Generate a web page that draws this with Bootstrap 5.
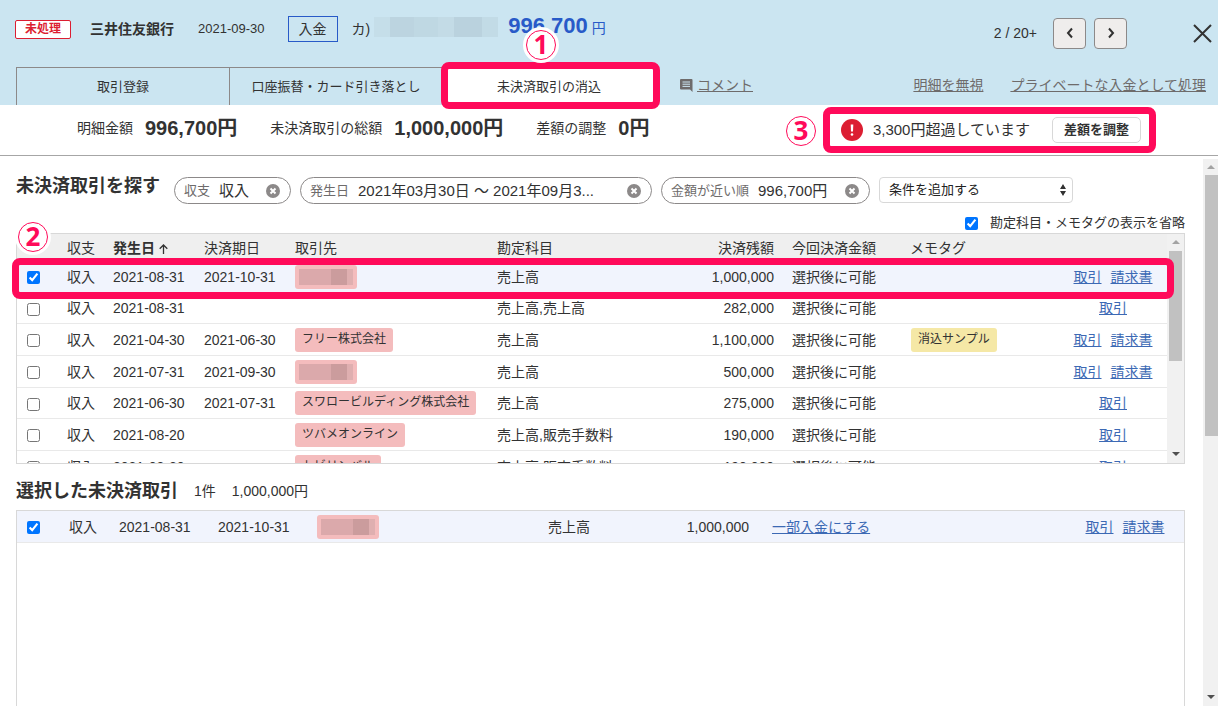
<!DOCTYPE html>
<html lang="ja">
<head>
<meta charset="utf-8">
<meta name="viewport" content="width=device-width, initial-scale=1">
<title>未決済取引の消込</title>
<link rel="stylesheet" href="https://cdn.jsdelivr.net/npm/bootstrap@5.3.0/dist/css/bootstrap.min.css">
<script src="https://cdn.jsdelivr.net/npm/bootstrap@5.3.0/dist/js/bootstrap.bundle.min.js"></script>
<style>
:root { --mark: #ff0a5a; --ink: #323232; --edge: #d8d8d8; }
body { font-family: "Liberation Sans", "Noto Sans CJK JP", sans-serif; font-size: 14px; line-height: 20px; color: var(--ink); }
button, select, input { font-family: inherit; }
.nowrap-all { white-space: nowrap; }

/* header */
.deal-head { background: #cbe5f1; }
.deal-info { height: 58px; padding-left: 15px; padding-right: 6px; }
.status-tag { background: #fff; color: #dc1e32; border: 1px solid #dc1e32; border-radius: 2px; font-size: 12px; line-height: 17px; padding: 0 9px; font-weight: 700; }
.kind-tag { border: 1px solid #285ac8; line-height: 24px; padding: 0 10px; }
.bank { margin: 0 24px 0 19px; }
.deal-date { font-size: 13px; margin-right: 23px; }
.payer { margin-left: 14px; }
.masked { display: inline-block; width: 124px; height: 20px; margin-left: 4px; margin-bottom: 4px; background: linear-gradient(90deg, #c5dee9 0 16px, #bcd4e0 16px 40px, #bfd8e3 40px 64px, #c3dbe6 64px 80px, #bad2de 80px 108px, #c2dbe6 108px); }
.amount { color: #285ac8; margin: 0 0 4px 10px; }
.amount strong { font-size: 22px; margin-right: 4px; }
.pager-btn { width: 33px; height: 31px; padding: 0; background: #efedec; border: 1px solid #8c8989; border-radius: 4px; display: flex; align-items: center; justify-content: center; }
.close-btn { border: 0; background: none; padding: 0; margin-left: 66px; display: flex; }
.tab-row { padding: 0 12px 0 16px; margin-top: 9px; height: 38px; }
.tab-list { flex: 0 0 640px; border: 1px solid #8c8989; border-bottom: 0; }
.tab-btn { flex: 1 1 0; border: 0; border-right: 1px solid #8c8989; background: none; font-size: 13px; padding: 0; color: var(--ink); position: relative; }
.tab-btn.current { background: #fff; border: 0; }
.tab-btn.current::after { content: ""; position: absolute; inset: -6px -5px -4px -2px; border: 7px solid var(--mark); border-radius: 8px; }
.sub-link { color: #6e6b6b; }
.sub-links { gap: 27px; padding-bottom: 2px; }

/* callouts */
.callout-num { position: absolute; width: 30px; height: 30px; border: 1px solid var(--mark); border-radius: 50%; background: #fff; box-shadow: 0 0 0 3px #fff; color: var(--mark); font: 700 26px/26px "Open Sans", sans-serif; text-align: center; z-index: 3; }
.num-one { top: -38px; left: 50%; margin-left: -23px; }
.num-two { top: -11px; left: 2px; }
.num-three { top: 2px; left: -44px; }
.row-frame { position: absolute; top: 25px; left: -4px; right: 11px; height: 41px; border: 7px solid var(--mark); border-radius: 8px; pointer-events: none; z-index: 2; }

/* summary */
.summary { height: 51px; border-bottom: 1px solid #a6a6a6; padding: 2px 62px 2px 77px; }
.summary dt { font-weight: 400; margin-right: 12px; }
.summary dd { font-size: 20px; line-height: 28px; font-weight: 700; margin: 0 33px 0 0; }
.over-box { position: relative; border: 7px solid var(--mark); border-radius: 8px; padding: 0 8px 0 11px; font-size: 15px; }
.over-box p { margin: 0 22px 0 10px; }
.adjust-btn { border: 1px solid var(--edge); border-radius: 5px; background: #fff; font-size: 13px; font-weight: 700; line-height: 24px; padding: 0 11px; color: var(--ink); }

/* search */
.content { padding: 21px 18px 0 16px; }
.sec-title { font-size: 18px; line-height: 18px; font-weight: 700; margin: 0; }
.chips { gap: 9px; padding-left: 14px; }
.chip { height: 27px; border: 1px solid #8c8989; border-radius: 14px; padding: 0 10px 0 9px; font-size: 15px; }
.chip small { font-size: 13px; color: #6e6b6b; margin-right: 9px; }
.chip button { border: 0; background: none; padding: 0; display: flex; margin-left: auto; }
.chip-kind { width: 117px; } .chip-date { width: 352px; } .chip-near { width: 209px; }
.cond-select { width: 194px; height: 26px; border: 1px solid var(--edge); border-radius: 4px; padding: 0 9px; font-size: 13px; color: #222; appearance: none; background: #fff url("data:image/svg+xml,%3Csvg xmlns='http://www.w3.org/2000/svg' width='6' height='12'%3E%3Cpath d='M0 5L3 0L6 5zM0 7h6L3 12z' fill='%23323232'/%3E%3C/svg%3E") no-repeat right 6px center; }
.omit-row { font-size: 13px; margin: 9px 0 0; gap: 12px; }
.tick { width: 13px; height: 13px; margin: 0; accent-color: #0075ff; display: inline-block; vertical-align: middle; }

/* tables */
.list-box { position: relative; height: 231px; }
.list-frame { border: 1px solid var(--edge); }
.deals { table-layout: fixed; width: 100%; border-collapse: separate; border-spacing: 0; white-space: nowrap; }
.deals th, .deals td { padding: 0; height: 32px; border-bottom: 1px solid #e9e9e9; }
.deals th { height: 27px; background: #efefef; border: 0; font-weight: 400; }
.deals th.sorted { font-weight: 700; }
.deals .short td { height: 31px; }
.deals .picked td { background: #f1f4fd; }
.deals td:first-child { padding-left: 10px; }
.deals .num { text-align: right; }
.deals .after-num { padding-left: 18px; }
.deals .links { text-align: center; }
.deals a { color: #3c69b4; }
.deals a + a { margin-left: 9px; }
.c-tick { width: 50px; } .c-kind { width: 46px; } .c-date { width: 91px; } .c-partner { width: 202px; }
.c-num { width: 86px; } .c-now { width: 136px; } .c-memo { width: 149px; } .c-links { width: 108px; }
.chosen .after-num { padding-left: 23px; }
.chosen .c-tick { width: 52px; } .chosen .c-kind { width: 50px; } .chosen .c-date { width: 99px; } .chosen .c-partner { width: 231px; }
.chosen .c-item { width: 100px; } .chosen .c-num { width: 101px; } .chosen .c-links { width: 118px; }
.name-tag { display: inline-block; vertical-align: middle; height: 24px; line-height: 22px; font-size: 12px; padding: 0 7px; border-radius: 3px; background: #f4bcbd; }
.memo-tag { background: #f5e8a6; margin-left: 1px; }
.hidden-name { width: 62px; padding: 4px; }
.hidden-name i { display: block; height: 16px; background: linear-gradient(90deg, #dba9ab 0 32px, #cb9c9d 32px 48px, #dfafb0 48px); }
.chosen-head { margin: 17px 0 9px; }

/* scroll bars */
.sbar { background: #f1f1f1; display: flex; flex-direction: column; align-items: center; justify-content: space-between; flex: none; }
.sbar svg { flex: none; }
.sbar-list { width: 17px; padding: 6px 0 7px; }
.sbar-list .thumb { flex: 0 0 110px; width: 13px; background: #c1c1c1; margin: 7px 0 auto; }
.sbar-page { width: 15px; margin-top: 3px; padding: 6px 0 7px; }
.sbar-page .thumb { flex: 0 0 261px; width: 13px; margin: 6px 0 auto 2px; background: #c1c1c1; }
</style>
</head>
<body class="vh-100 overflow-hidden d-flex flex-column nowrap-all">

<header class="deal-head">
  <div class="deal-info d-flex align-items-center">
    <span class="status-tag">未処理</span>
    <strong class="bank">三井住友銀行</strong>
    <span class="deal-date">2021-09-30</span>
    <span class="kind-tag">入金</span>
    <span class="payer">カ)</span>
    <span class="masked"></span>
    <span class="amount"><strong>996,700</strong>円</span>
    <div class="ms-auto d-flex align-items-center pt-2">
      <span class="me-3">2 / 20+</span>
      <button class="pager-btn me-2" type="button" aria-label="前へ"><svg width="8" height="12" viewBox="0 0 8 12" fill="none" stroke="#323232" stroke-width="2"><path d="M6 1.500 2 6l4 4.500"/></svg></button>
      <button class="pager-btn" type="button" aria-label="次へ"><svg width="8" height="12" viewBox="0 0 8 12" fill="none" stroke="#323232" stroke-width="2"><path d="M2 1.500 6 6l-4 4.500"/></svg></button>
      <button class="close-btn" type="button" aria-label="閉じる"><svg width="19" height="19" viewBox="0 0 19 19" fill="none" stroke="#323232" stroke-width="2"><path d="M1 1 18 18M18 1 1 18"/></svg></button>
    </div>
  </div>
  <div class="tab-row d-flex">
    <div class="tab-list d-flex" role="tablist">
      <button class="tab-btn" type="button" role="tab">取引登録</button>
      <button class="tab-btn" type="button" role="tab">口座振替・カード引き落とし</button>
      <button class="tab-btn current" type="button" role="tab" aria-selected="true">未決済取引の消込<span class="callout-num num-one">1</span></button>
    </div>
    <div class="sub-links d-flex align-items-center flex-grow-1 ps-4">
      <span class="d-flex align-items-center me-auto"><svg class="me-1" width="13" height="13" viewBox="0 0 13 13"><path d="M1 0h10.500q1 0 1 1v12L10 10.500H1q-1 0-1-1V1q0-1 1-1z" fill="#6e6b6b"/><path d="M2.500 3h7.500M2.500 5.200h7.500M2.500 7.400h7.500" stroke="#cbe5f1" stroke-width="1"/></svg>
      <a class="sub-link" href="#">コメント</a></span>
      <a class="sub-link" href="#">明細を無視</a>
      <a class="sub-link" href="#">プライベートな入金として処理</a>
    </div>
  </div>
</header>

<section class="summary d-flex">
  <dl class="d-flex align-items-center m-0 pb-1">
    <dt>明細金額</dt><dd>996,700円</dd>
    <dt>未決済取引の総額</dt><dd>1,000,000円</dd>
    <dt>差額の調整</dt><dd>0円</dd>
  </dl>
  <div class="over-box d-flex align-items-center ms-auto">
    <span class="callout-num num-three">3</span>
    <svg width="22" height="22" viewBox="0 0 22 22"><circle cx="11" cy="11" r="11" fill="#dc1e32"/><path d="M9.700 5.500h2.600l-.3 7h-2z" fill="#fff"/><circle cx="11" cy="15.500" r="1.300" fill="#fff"/></svg>
    <p>3,300円超過しています</p>
    <button class="adjust-btn" type="button">差額を調整</button>
  </div>
</section>

<div class="d-flex flex-grow-1 overflow-hidden">
  <main class="content flex-grow-1 d-flex flex-column overflow-hidden">
    <div class="d-flex align-items-start">
      <h2 class="sec-title flex-shrink-0">未決済取引を探す</h2>
      <div class="chips d-flex flex-grow-1">
        <div class="chip chip-kind d-flex align-items-center"><small>収支</small>収入<button type="button" aria-label="削除"><svg width="14" height="14" viewBox="0 0 14 14"><circle cx="7" cy="7" r="7" fill="#8c8989"/><path d="m4.500 4.500 5 5m0-5-5 5" stroke="#fff" stroke-width="2"/></svg></button></div>
        <div class="chip chip-date d-flex align-items-center"><small>発生日</small>2021年03月30日 ～ 2021年09月3...<button type="button" aria-label="削除"><svg width="14" height="14" viewBox="0 0 14 14"><circle cx="7" cy="7" r="7" fill="#8c8989"/><path d="m4.500 4.500 5 5m0-5-5 5" stroke="#fff" stroke-width="2"/></svg></button></div>
        <div class="chip chip-near d-flex align-items-center"><small>金額が近い順</small>996,700円<button type="button" aria-label="削除"><svg width="14" height="14" viewBox="0 0 14 14"><circle cx="7" cy="7" r="7" fill="#8c8989"/><path d="m4.500 4.500 5 5m0-5-5 5" stroke="#fff" stroke-width="2"/></svg></button></div>
        <select class="cond-select" aria-label="条件"><option>条件を追加する</option></select>
      </div>
    </div>
    <div class="omit-row d-flex align-items-center justify-content-end">
      <input class="tick" type="checkbox" id="omit" checked><label for="omit">勘定科目・メモタグの表示を省略</label>
    </div>

    <div class="list-box flex-shrink-0">
      <span class="callout-num num-two">2</span>
      <div class="row-frame"></div>
      <div class="list-frame h-100 d-flex overflow-hidden">
        <div class="flex-grow-1 overflow-hidden">
          <table class="deals">
            <colgroup><col class="c-tick"><col class="c-kind"><col class="c-date"><col class="c-date"><col class="c-partner"><col><col class="c-num"><col class="c-now"><col class="c-memo"><col class="c-links"></colgroup>
            <thead><tr><th></th><th>収支</th><th class="sorted">発生日<svg class="ms-1" width="9" height="10" viewBox="0 0 9 10" fill="none" stroke="#323232" stroke-width="1.300"><path d="M4.500 10V1M.7 4.800l3.800-3.800 3.800 3.800"/></svg></th><th>決済期日</th><th>取引先</th><th>勘定科目</th><th class="num">決済残額</th><th class="after-num">今回決済金額</th><th>メモタグ</th><th></th></tr></thead>
            <tbody>
              <tr class="picked"><td><input class="tick" type="checkbox" aria-label="選択" checked></td><td>収入</td><td>2021-08-31</td><td>2021-10-31</td><td><span class="name-tag hidden-name"><i></i></span></td><td>売上高</td><td class="num">1,000,000</td><td class="after-num">選択後に可能</td><td></td><td class="links"><a href="#">取引</a><a href="#">請求書</a></td></tr>
              <tr class="short"><td><input class="tick" type="checkbox" aria-label="選択"></td><td>収入</td><td>2021-08-31</td><td></td><td></td><td>売上高,売上高</td><td class="num">282,000</td><td class="after-num">選択後に可能</td><td></td><td class="links"><a href="#">取引</a></td></tr>
              <tr><td><input class="tick" type="checkbox" aria-label="選択"></td><td>収入</td><td>2021-04-30</td><td>2021-06-30</td><td><span class="name-tag">フリー株式会社</span></td><td>売上高</td><td class="num">1,100,000</td><td class="after-num">選択後に可能</td><td><span class="name-tag memo-tag">消込サンプル</span></td><td class="links"><a href="#">取引</a><a href="#">請求書</a></td></tr>
              <tr><td><input class="tick" type="checkbox" aria-label="選択"></td><td>収入</td><td>2021-07-31</td><td>2021-09-30</td><td><span class="name-tag hidden-name"><i></i></span></td><td>売上高</td><td class="num">500,000</td><td class="after-num">選択後に可能</td><td></td><td class="links"><a href="#">取引</a><a href="#">請求書</a></td></tr>
              <tr class="short"><td><input class="tick" type="checkbox" aria-label="選択"></td><td>収入</td><td>2021-06-30</td><td>2021-07-31</td><td><span class="name-tag">スワロービルディング株式会社</span></td><td>売上高</td><td class="num">275,000</td><td class="after-num">選択後に可能</td><td></td><td class="links"><a href="#">取引</a></td></tr>
              <tr><td><input class="tick" type="checkbox" aria-label="選択"></td><td>収入</td><td>2021-08-20</td><td></td><td><span class="name-tag">ツバメオンライン</span></td><td>売上高,販売手数料</td><td class="num">190,000</td><td class="after-num">選択後に可能</td><td></td><td class="links"><a href="#">取引</a></td></tr>
              <tr><td><input class="tick" type="checkbox" aria-label="選択"></td><td>収入</td><td>2021-08-20</td><td></td><td><span class="name-tag">トビリンバル</span></td><td>売上高,販売手数料</td><td class="num">190,000</td><td class="after-num">選択後に可能</td><td></td><td class="links"><a href="#">取引</a></td></tr>
            </tbody>
          </table>
        </div>
        <div class="sbar sbar-list" aria-hidden="true">
          <svg width="8" height="4" viewBox="0 0 8 4"><path d="M0 4 4 0l4 4z" fill="#a3a3a3"/></svg>
          <div class="thumb"></div>
          <svg width="8" height="4" viewBox="0 0 8 4"><path d="M0 0h8L4 4z" fill="#505050"/></svg>
        </div>
      </div>
    </div>

    <div class="chosen-head d-flex align-items-center flex-shrink-0">
      <h2 class="sec-title me-3">選択した未決済取引</h2>
      <span class="me-3">1件</span><span>1,000,000円</span>
    </div>
    <div class="list-frame flex-grow-1 border-bottom-0">
      <table class="deals chosen">
        <colgroup><col class="c-tick"><col class="c-kind"><col class="c-date"><col class="c-date"><col class="c-partner"><col class="c-item"><col class="c-num"><col><col class="c-links"></colgroup>
        <tbody><tr class="picked"><td><input class="tick" type="checkbox" aria-label="選択" checked></td><td>収入</td><td>2021-08-31</td><td>2021-10-31</td><td><span class="name-tag hidden-name"><i></i></span></td><td>売上高</td><td class="num">1,000,000</td><td class="after-num"><a href="#">一部入金にする</a></td><td class="links"><a href="#">取引</a><a href="#">請求書</a></td></tr></tbody>
      </table>
    </div>
  </main>
  <div class="sbar sbar-page" aria-hidden="true">
    <svg width="8" height="4" viewBox="0 0 8 4"><path d="M0 4 4 0l4 4z" fill="#a3a3a3"/></svg>
    <div class="thumb"></div>
    <svg width="8" height="4" viewBox="0 0 8 4"><path d="M0 0h8L4 4z" fill="#505050"/></svg>
  </div>
</div>
</body>
</html>
